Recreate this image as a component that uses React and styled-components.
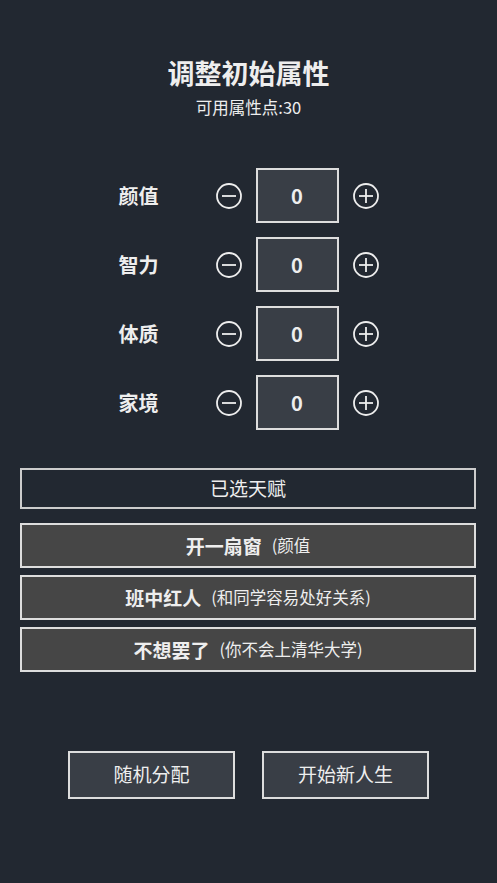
import React, { useState } from 'react';
import styled, { createGlobalStyle } from 'styled-components';

const GlobalStyle = createGlobalStyle`
  html, body {
    margin: 0;
    padding: 0;
    background: #222831;
  }
  body {
    font-family: "Noto Sans CJK SC", "Noto Sans", sans-serif;
    color: #eeeeee;
  }
`;

const Page = styled.div`
  min-height: 883px;
  box-sizing: border-box;
  padding: 56px 0 0;
  display: flex;
  flex-direction: column;
  align-items: center;
`;

const Title = styled.h1`
  margin: 0;
  font-size: 27px;
  line-height: 34px;
  font-weight: 700;
`;

const Sub = styled.div`
  margin-top: 6px;
  font-size: 16.5px;
  line-height: 22px;
`;

const Stats = styled.div`
  margin-top: 50px;
  display: flex;
  flex-direction: column;
  gap: 14px;
`;

const Row = styled.div`
  display: flex;
  align-items: center;
  gap: 14px;
`;

const Label = styled.div`
  width: 83px;
  font-size: 20px;
  font-weight: 700;
`;

const IconBtn = styled.button`
  width: 26px;
  height: 26px;
  padding: 0;
  border: 0;
  background: none;
  color: #eeeeee;
  display: flex;
  cursor: pointer;
`;

const ValueBox = styled.div`
  width: 83px;
  height: 55px;
  box-sizing: border-box;
  border: 2px solid #dddddd;
  background: #393e46;
  display: flex;
  align-items: center;
  justify-content: center;
  font-size: 20px;
  font-weight: 700;
`;

const Talents = styled.div`
  align-self: stretch;
  margin: 38px 21px 0 20px;
  display: flex;
  flex-direction: column;
  gap: 7px;
`;

const TalentHead = styled.div`
  height: 41px;
  box-sizing: border-box;
  border: 2px solid #cccccc;
  padding-bottom: 3px;
  display: flex;
  align-items: center;
  justify-content: center;
  font-size: 19px;
  margin-bottom: 7px;
`;

const TalentItem = styled.div`
  height: 45px;
  box-sizing: border-box;
  border: 2px solid #dddddd;
  background: #464646;
  padding-bottom: 1px;
  display: flex;
  align-items: center;
  justify-content: center;
`;

const TalentName = styled.span`
  font-size: 19px;
  font-weight: 700;
`;

const TalentDesc = styled.span`
  margin-left: 10px;
  font-size: 16.5px;
`;

const Actions = styled.div`
  margin-top: 79px;
  display: flex;
  gap: 27px;
`;

const ActionBtn = styled.button`
  width: 167px;
  height: 48px;
  box-sizing: border-box;
  border: 2px solid #dddddd;
  background: #393e46;
  color: #eeeeee;
  font-family: inherit;
  font-size: 19px;
  padding: 0 0 3px;
  cursor: pointer;
`;

const CircleIcon = ({ plus }) => (
  <svg width="26" height="26" viewBox="0 0 26 26" fill="none" stroke="currentColor" strokeWidth="1.8">
    <circle cx="13" cy="13" r="12" />
    <line x1="6" y1="13" x2="20" y2="13" />
    {plus && <line x1="13" y1="6" x2="13" y2="20" />}
  </svg>
);

const stats = ['颜值', '智力', '体质', '家境'];

const talents = [
  { name: '开一扇窗', desc: '(颜值' },
  { name: '班中红人', desc: '(和同学容易处好关系)' },
  { name: '不想罢了', desc: '(你不会上清华大学)' },
];

export default function App() {
  const [values, setValues] = useState([0, 0, 0, 0]);
  const left = 30 - values.reduce((a, b) => a + b, 0);

  const change = (i, d) => {
    setValues(v => v.map((x, j) => (j === i ? Math.max(0, x + d) : x)));
  };

  return (
    <>
      <GlobalStyle />
      <Page>
        <Title>调整初始属性</Title>
        <Sub>可用属性点:{left}</Sub>
        <Stats>
          {stats.map((s, i) => (
            <Row key={s}>
              <Label>{s}</Label>
              <IconBtn onClick={() => change(i, -1)}>
                <CircleIcon />
              </IconBtn>
              <ValueBox>{values[i]}</ValueBox>
              <IconBtn onClick={() => left > 0 && change(i, 1)}>
                <CircleIcon plus />
              </IconBtn>
            </Row>
          ))}
        </Stats>
        <Talents>
          <TalentHead>已选天赋</TalentHead>
          {talents.map(t => (
            <TalentItem key={t.name}>
              <TalentName>{t.name}</TalentName>
              <TalentDesc>{t.desc}</TalentDesc>
            </TalentItem>
          ))}
        </Talents>
        <Actions>
          <ActionBtn>随机分配</ActionBtn>
          <ActionBtn>开始新人生</ActionBtn>
        </Actions>
      </Page>
    </>
  );
}
